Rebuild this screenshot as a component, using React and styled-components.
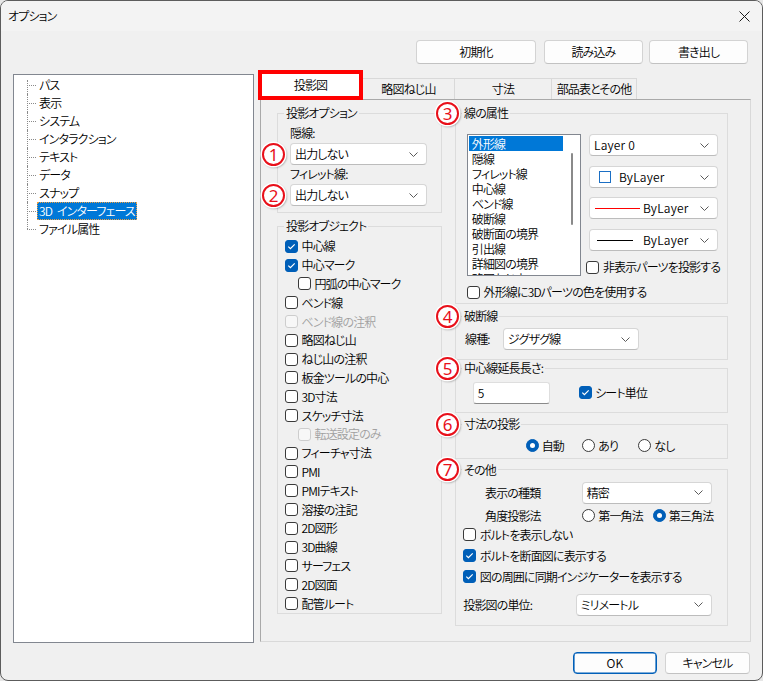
import React from "react";
import styled, { createGlobalStyle } from "styled-components";

const FONT = `"Noto Sans CJK JP", "Noto Sans", sans-serif`;
const RED = "#e8101a";
const BLUE = "#005fb8";

const GlobalStyle = createGlobalStyle`
  html, body { margin: 0; padding: 0; background: #e6e6e6; }
  body { font-family: ${FONT}; font-size: 12px; color: #000; }
  * { box-sizing: border-box; }
`;

const treeItems = [
  "パス",
  "表示",
  "システム",
  "インタラクション",
  "テキスト",
  "データ",
  "スナップ",
  "3D インターフェース",
  "ファイル属性",
];

const tabs = [
  { label: "投影図", w: 105, active: true },
  { label: "略図ねじ山", w: 92 },
  { label: "寸法", w: 97 },
  { label: "部品表とその他", w: 85 },
];

const objects = [
  { t: "中心線", c: true },
  { t: "中心マーク", c: true },
  { t: "円弧の中心マーク", i: 13 },
  { t: "ベンド線" },
  { t: "ベンド線の注釈", d: true },
  { t: "略図ねじ山" },
  { t: "ねじ山の注釈" },
  { t: "板金ツールの中心" },
  { t: "3D寸法" },
  { t: "スケッチ寸法" },
  { t: "転送設定のみ", i: 13, d: true },
  { t: "フィーチャ寸法" },
  { t: "PMI" },
  { t: "PMIテキスト" },
  { t: "溶接の注記" },
  { t: "2D図形" },
  { t: "3D曲線" },
  { t: "サーフェス" },
  { t: "2D図面" },
  { t: "配管ルート" },
];

const lineTypes = [
  "外形線",
  "隠線",
  "フィレット線",
  "中心線",
  "ベンド線",
  "破断線",
  "破断面の境界",
  "引出線",
  "詳細図の境界",
  "略図ねじ山",
];

const Chevron = () => (
  <ChevronSvg width="9" height="5" viewBox="0 0 9 5">
    <path d="M0.5 0.5L4.5 4.5L8.5 0.5" fill="none" stroke="#5a5a5a" strokeWidth="1" />
  </ChevronSvg>
);

const Tick = () => (
  <svg width="11" height="11" viewBox="0 0 11 11">
    <path d="M2.3 5.6L4.4 7.7L8.7 3.4" fill="none" stroke="#fff" strokeWidth="1.2" />
  </svg>
);

const Check = ({ checked, disabled, indent, h, ml, children }) => (
  <CheckRow $h={h} $indent={indent} $ml={ml} $disabled={disabled}>
    <CheckBox $checked={checked} $disabled={disabled}>
      {checked && <Tick />}
    </CheckBox>
    <span>{children}</span>
  </CheckRow>
);

const Radio = ({ on, w, children }) => (
  <RadioItem $w={w}>
    <RadioCircle $on={on} />
    <span>{children}</span>
  </RadioItem>
);

const Combo = ({ w, children }) => (
  <ComboBox $w={w}>
    {children}
    <Chevron />
  </ComboBox>
);

const OptionsDialog = () => {
  return (
    <Window>
      <GlobalStyle />
      <TitleBar>
        <span>オプション</span>
        <svg width="11" height="11" viewBox="0 0 11 11">
          <path d="M0.5 0.5L10.5 10.5M10.5 0.5L0.5 10.5" stroke="#1a1a1a" strokeWidth="1" />
        </svg>
      </TitleBar>

      <Toolbar>
        <Button $w={120}>初期化</Button>
        <Button $w={99} $ml={8}>読み込み</Button>
        <Button $w={99} $ml={6}>書き出し</Button>
      </Toolbar>

      <Main>
        <Tree>
          {treeItems.map((t, i) => (
            <TreeRow key={t} $first={i === 0} $last={i === treeItems.length - 1}>
              <TreeLabel $selected={i === 7}>{t}</TreeLabel>
            </TreeRow>
          ))}
        </Tree>

        <TabArea>
          <TabStrip>
            {tabs.map((t) => (
              <Tab key={t.label} $w={t.w} $active={t.active}>
                {t.label}
              </Tab>
            ))}
          </TabStrip>

          <Panel>
            <Column>
              <Group>
                <Legend>投影オプション</Legend>
                <Stack $ml={6}>
                  <FieldLabel>隠線:</FieldLabel>
                  <FieldRow $mt={2}>
                    <Badge $x={-28} $y={-0.5}>1</Badge>
                    <Combo w={137}>出力しない</Combo>
                  </FieldRow>
                  <FieldLabel $mt={1}>フィレット線:</FieldLabel>
                  <FieldRow $mt={2}>
                    <Badge $x={-28} $y={-0.5}>2</Badge>
                    <Combo w={137}>出力しない</Combo>
                  </FieldRow>
                </Stack>
              </Group>

              <Group $mt={5} $pad="3px 6px 0 6px">
                <Legend>投影オブジェクト</Legend>
                <Stack $ml={1}>
                  {objects.map((o) => (
                    <Check key={o.t} checked={o.c} disabled={o.d} indent={o.i} h={18.8}>
                      {o.t}
                    </Check>
                  ))}
                </Stack>
              </Group>
            </Column>

            <Column>
              <GroupWrap>
                <Badge $x={-19} $y={-3.5}>3</Badge>
                <Group $pad="13px 6px 3px 6px">
                  <Legend>線の属性</Legend>
                  <AttrRow>
                    <ListBox>
                      <ListItems>
                        {lineTypes.map((t, i) => (
                          <ListItem key={t} $selected={i === 0}>
                            {t}
                          </ListItem>
                        ))}
                      </ListItems>
                      <ScrollTrack>
                        <Thumb />
                      </ScrollTrack>
                    </ListBox>
                    <Stack $ml={8}>
                      <Combo w={129}>
                        <ComboText>Layer 0</ComboText>
                      </Combo>
                      <FieldRow $mt={10}>
                        <Combo w={129}>
                          <Swatch />
                          <ComboText $ml={8}>ByLayer</ComboText>
                        </Combo>
                      </FieldRow>
                      <FieldRow $mt={9}>
                        <Combo w={129}>
                          <LineSample $color="#ff0000" $w={45} />
                          <ComboText $ml={3}>ByLayer</ComboText>
                        </Combo>
                      </FieldRow>
                      <FieldRow $mt={10}>
                        <Combo w={129}>
                          <LineSample $color="#000" $w={36} $ml={3} />
                          <ComboText $ml={10}>ByLayer</ComboText>
                        </Combo>
                      </FieldRow>
                      <Spacer $h={8} />
                      <Check h={16} ml={-2.6}>
                        非表示パーツを投影する
                      </Check>
                    </Stack>
                  </AttrRow>
                  <Spacer $h={8} />
                  <Check h={16} ml={5}>
                    外形線に3Dパーツの色を使用する
                  </Check>
                </Group>
              </GroupWrap>

              <GroupWrap $mt={4}>
                <Badge $x={-19} $y={-3.5}>4</Badge>
                <Group $pad="4px 6px 9px 6px">
                  <Legend>破断線</Legend>
                  <InlineRow $ml={3}>
                    <InlineLabel $w={37.7}>線種:</InlineLabel>
                    <Combo w={136}>ジグザグ線</Combo>
                  </InlineRow>
                </Group>
              </GroupWrap>

              <GroupWrap>
                <Badge $x={-19} $y={-3.5}>5</Badge>
                <Group $pad="5.5px 6px 8px 6px">
                  <Legend>中心線延長長さ:</Legend>
                  <InlineRow $ml={10.7}>
                    <TextBox>5</TextBox>
                    <Check h={22} ml={29} checked>
                      シート単位
                    </Check>
                  </InlineRow>
                </Group>
              </GroupWrap>

              <GroupWrap $mt={3.5}>
                <Badge $x={-19} $y={-3.5}>6</Badge>
                <Group $pad="5.7px 6px 4.6px 6px">
                  <Legend>寸法の投影</Legend>
                  <InlineRow $ml={63.7} $h={16}>
                    <Radio on w={56.6}>自動</Radio>
                    <Radio w={56}>あり</Radio>
                    <Radio w={50}>なし</Radio>
                  </InlineRow>
                </Group>
              </GroupWrap>

              <GroupWrap $mt={2.7}>
                <Badge $x={-19} $y={-3.5}>7</Badge>
                <Group $pad="3.7px 6px 9px 6px">
                  <Legend>その他</Legend>
                  <InlineRow $ml={23}>
                    <InlineLabel $w={96.7}>表示の種類</InlineLabel>
                    <Combo w={130}>精密</Combo>
                  </InlineRow>
                  <InlineRow $ml={23} $h={16} $mt={4}>
                    <InlineLabel $w={97.3}>角度投影法</InlineLabel>
                    <Radio w={70.4}>第一角法</Radio>
                    <Radio on w={70}>第三角法</Radio>
                  </InlineRow>
                  <Spacer $h={3.3} />
                  <Check h={16} ml={1.3}>ボルトを表示しない</Check>
                  <Spacer $h={4.7} />
                  <Check h={16} ml={1.3} checked>ボルトを断面図に表示する</Check>
                  <Spacer $h={5} />
                  <Check h={16} ml={1.3} checked>図の周囲に同期インジケーターを表示する</Check>
                  <InlineRow $ml={1.3} $mt={9.3}>
                    <InlineLabel $w={112.4}>投影図の単位:</InlineLabel>
                    <Combo w={136}>ミリメートル</Combo>
                  </InlineRow>
                </Group>
              </GroupWrap>
            </Column>
          </Panel>
        </TabArea>
      </Main>

      <Footer>
        <Button $w={84} $h={22} $primary>
          <ComboText>OK</ComboText>
        </Button>
        <Button $w={85} $h={22} $ml={8}>キャンセル</Button>
      </Footer>
    </Window>
  );
};

// Styled components
const Window = styled.div`
  width: 763px;
  height: 681px;
  border: 1px solid #5c5c5c;
  border-radius: 8px;
  overflow: hidden;
  background: #f0f0f0;
  display: flex;
  flex-direction: column;
  font-family: ${FONT};
  font-size: 12px;
  font-weight: 350;
  line-height: 16px;
  letter-spacing: -0.85px;
  font-feature-settings: "palt";
`;

const TitleBar = styled.div`
  height: 30px;
  flex: none;
  background: #f3f3f3;
  display: flex;
  align-items: center;
  justify-content: space-between;
  padding: 0 12px 0 7px;
`;

const Toolbar = styled.div`
  display: flex;
  justify-content: flex-end;
  padding: 9px 14px 0 0;
`;

const Button = styled.div`
  width: ${(p) => p.$w}px;
  height: ${(p) => p.$h || 24}px;
  margin-left: ${(p) => p.$ml || 0}px;
  display: flex;
  align-items: center;
  justify-content: center;
  background: #fdfdfd;
  border: 1px solid ${(p) => (p.$primary ? BLUE : "#d3d3d3")};
  border-bottom-color: ${(p) => (p.$primary ? BLUE : "#c2c2c2")};
  border-radius: 4px;
  box-shadow: ${(p) => (p.$primary ? `inset 0 0 0 0.6px ${BLUE}` : "none")};
`;

const Main = styled.div`
  display: flex;
  align-items: flex-start;
  margin-top: 6px;
  padding-left: 12px;
  height: 573px;
`;

const Tree = styled.div`
  width: 241px;
  height: 569px;
  margin-top: 4px;
  background: #fff;
  border: 1px solid #828790;
  padding-top: 1px;
`;

const TreeRow = styled.div`
  position: relative;
  height: 18px;
  display: flex;
  align-items: center;
  padding-left: 23px;

  &::before {
    content: "";
    position: absolute;
    left: 13px;
    top: 9px;
    width: 9px;
    border-top: 1px dotted #8a8a8a;
  }

  &::after {
    content: "";
    position: absolute;
    left: 13px;
    top: ${(p) => (p.$first ? 4 : 0)}px;
    height: ${(p) => (p.$last ? 9 : p.$first ? 14 : 18)}px;
    border-left: 1px dotted #8a8a8a;
  }
`;

const TreeLabel = styled.span`
  height: 18px;
  line-height: 18px;
  padding: 0 2px 0 2px;
  white-space: pre;
  word-spacing: 3px;
  background: ${(p) => (p.$selected ? "#0078d7" : "transparent")};
  color: ${(p) => (p.$selected ? "#fff" : "#000")};
  outline: ${(p) => (p.$selected ? "1px dotted #f0a040" : "none")};
  outline-offset: -1px;
`;

const TabArea = styled.div`
  margin-left: 4px;
  width: 493px;
  display: flex;
  flex-direction: column;
`;

const TabStrip = styled.div`
  display: flex;
  align-items: flex-end;
  height: 29px;
`;

const Tab = styled.div`
  position: relative;
  z-index: ${(p) => (p.$active ? 1 : 0)};
  width: ${(p) => p.$w}px;
  height: ${(p) => (p.$active ? 30 : 21)}px;
  margin-bottom: ${(p) => (p.$active ? -1 : 0)}px;
  display: flex;
  align-items: center;
  justify-content: center;
  white-space: nowrap;
  background: ${(p) => (p.$active ? "#fff" : "#f0f0f0")};
  border: ${(p) => (p.$active ? "4px solid #ff0000" : "1px solid #d9d9d9")};
  border-left-width: ${(p) => (p.$active ? 4 : 0)}px;
  border-bottom-width: ${(p) => (p.$active ? 4 : 0)}px;
`;

const Panel = styled.div`
  margin-left: 2px;
  width: 491px;
  height: 543px;
  border: 1px solid #d9d9d9;
  border-top-color: #a9a9a9;
  border-left-color: #a9a9a9;
  display: grid;
  grid-template-columns: 165px 273px;
  column-gap: 13px;
  align-items: start;
  padding: 5px 0 0 16px;
`;

const Column = styled.div`
  display: flex;
  flex-direction: column;
`;

const GroupWrap = styled.div`
  position: relative;
  margin-top: ${(p) => p.$mt || 0}px;
`;

const Group = styled.fieldset`
  margin: ${(p) => p.$mt || 0}px 0 0 0;
  padding: ${(p) => p.$pad || "4px 6px 6px 6px"};
  border: 1px solid #dcdcdc;
  min-width: 0;
`;

const Legend = styled.legend`
  padding: 0 2px;
  line-height: 16px;
  font-size: 12px;
`;

const Badge = styled.span`
  position: absolute;
  left: ${(p) => p.$x}px;
  top: ${(p) => p.$y}px;
  z-index: 2;
  width: 23px;
  height: 23px;
  border-radius: 50%;
  border: 2px solid ${RED};
  background: #fff;
  color: ${RED};
  display: flex;
  align-items: center;
  justify-content: center;
  letter-spacing: 0;
  font: 17px/1 "Noto Sans", "Liberation Sans", sans-serif;
  box-shadow: 0 0 0 1.5px #fff, 1px 1px 2px 1px rgba(0, 0, 0, 0.3);
`;

const Stack = styled.div`
  display: flex;
  flex-direction: column;
  margin-left: ${(p) => p.$ml || 0}px;
`;

const FieldLabel = styled.div`
  height: 16px;
  margin-top: ${(p) => p.$mt || 0}px;
`;

const FieldRow = styled.div`
  position: relative;
  margin-top: ${(p) => p.$mt || 0}px;
`;

const ComboBox = styled.div`
  width: ${(p) => p.$w}px;
  height: 22px;
  display: flex;
  align-items: center;
  padding: 0 8px 0 4px;
  background: #fff;
  border: 1px solid #d6d6d6;
  border-bottom-color: #bcbcbc;
  border-radius: 4px;
  white-space: nowrap;
`;

const ChevronSvg = styled.svg`
  margin-left: auto;
  flex: none;
`;

const ComboText = styled.span`
  margin-left: ${(p) => p.$ml || 0}px;
  letter-spacing: 0.2px;
`;

const Swatch = styled.span`
  width: 12px;
  height: 12px;
  margin-left: 5px;
  border: 1px solid #1b6fc4;
  background: #fff;
  flex: none;
`;

const LineSample = styled.span`
  width: ${(p) => p.$w}px;
  margin-left: ${(p) => p.$ml || 1}px;
  border-top: 1px solid ${(p) => p.$color};
  flex: none;
`;

const CheckRow = styled.div`
  display: flex;
  align-items: center;
  height: ${(p) => p.$h || 16}px;
  margin-left: ${(p) => (p.$ml || 0) + (p.$indent || 0)}px;
  color: ${(p) => (p.$disabled ? "#a0a0a0" : "#000")};
  white-space: nowrap;
`;

const CheckBox = styled.span`
  width: 13px;
  height: 13px;
  flex: none;
  margin-right: 3.5px;
  border-radius: 3px;
  border: 1px solid ${(p) => (p.$checked ? BLUE : p.$disabled ? "#cdcdcd" : "#3a3a3a")};
  background: ${(p) => (p.$checked ? BLUE : p.$disabled ? "#f7f7f7" : "#fff")};
  display: flex;
  align-items: center;
  justify-content: center;
`;

const RadioItem = styled.div`
  width: ${(p) => p.$w}px;
  display: flex;
  align-items: center;
  white-space: nowrap;
  flex: none;
`;

const RadioCircle = styled.span`
  width: 13px;
  height: 13px;
  flex: none;
  margin-right: 3px;
  border-radius: 50%;
  border: 1px solid ${(p) => (p.$on ? BLUE : "#3a3a3a")};
  background: ${(p) => (p.$on ? BLUE : "#fff")};
  display: flex;
  align-items: center;
  justify-content: center;

  &::after {
    content: "";
    display: ${(p) => (p.$on ? "block" : "none")};
    width: 5px;
    height: 5px;
    border-radius: 50%;
    background: #fff;
  }
`;

const AttrRow = styled.div`
  display: flex;
  align-items: flex-start;
`;

const ListBox = styled.div`
  width: 114px;
  height: 142px;
  margin-left: 5px;
  flex: none;
  display: flex;
  background: #fff;
  border: 1px solid #828790;
  overflow: hidden;
  padding: 0.7px 0 0 0.8px;
`;

const ListItems = styled.div`
  width: 94px;
  flex: none;
`;

const ListItem = styled.div`
  height: 15px;
  line-height: 15px;
  padding-left: 3px;
  white-space: nowrap;
  background: ${(p) => (p.$selected ? "#0078d7" : "transparent")};
  color: ${(p) => (p.$selected ? "#fff" : "#000")};
`;

const ScrollTrack = styled.div`
  flex: 1;
  padding: 17px 0 0 8.5px;
`;

const Thumb = styled.div`
  width: 2px;
  height: 72px;
  background: #8a8a8a;
  border-radius: 1px;
`;

const Spacer = styled.div`
  height: ${(p) => p.$h}px;
  flex: none;
`;

const InlineRow = styled.div`
  display: flex;
  align-items: center;
  height: ${(p) => p.$h || 22}px;
  margin-left: ${(p) => p.$ml || 0}px;
  margin-top: ${(p) => p.$mt || 0}px;
`;

const InlineLabel = styled.span`
  width: ${(p) => p.$w}px;
  flex: none;
  white-space: nowrap;
`;

const TextBox = styled.div`
  width: 77px;
  height: 22px;
  flex: none;
  display: flex;
  align-items: center;
  padding-left: 4px;
  background: #fff;
  border: 1px solid #dedede;
  border-bottom-color: #8a8a8a;
  border-radius: 3px;
`;

const Footer = styled.div`
  display: flex;
  justify-content: flex-end;
  padding: 9px 12px 0 0;
`;

export default OptionsDialog;
